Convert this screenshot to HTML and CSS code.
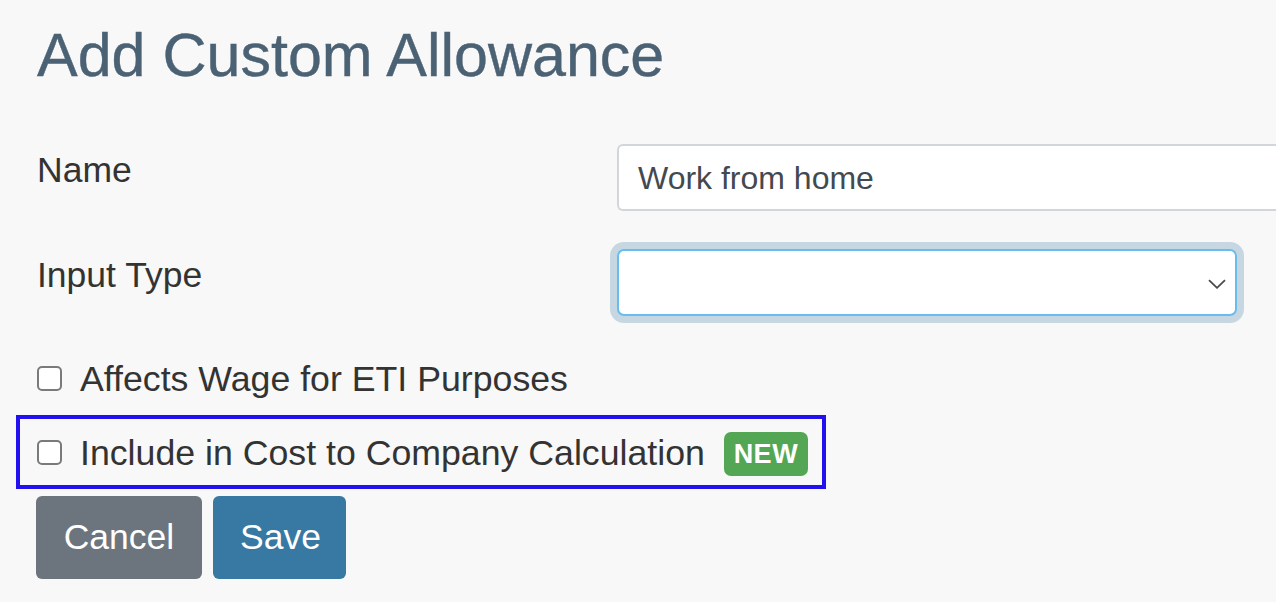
FILE: index.html
```html
<!DOCTYPE html>
<html lang="en">
<head>
<meta charset="utf-8">
<title>Add Custom Allowance</title>
<link rel="stylesheet" href="styles.css">
</head>
<body>
<div class="page">
  <h1 class="title">Add Custom Allowance</h1>
  <form class="form">
    <div class="row row-name">
      <label class="label">Name</label>
      <div class="input name-input">Work from home</div>
    </div>
    <div class="row row-type">
      <label class="label">Input Type</label>
      <div class="select">
        <svg class="chevron" width="18" height="10" viewBox="0 0 18 10"><path d="M1 1.2 L9 8.8 L17 1.2" fill="none" stroke="#4a4a4a" stroke-width="1.8"/></svg>
      </div>
    </div>
    <div class="check-row">
      <span class="checkbox"></span>
      <span class="check-label">Affects Wage for ETI Purposes</span>
    </div>
    <div class="highlight">
      <div class="check-row inner">
        <span class="checkbox"></span>
        <span class="check-label">Include in Cost to Company Calculation</span>
        <span class="badge">NEW</span>
      </div>
    </div>
    <div class="actions">
      <button type="button" class="btn btn-cancel">Cancel</button>
      <button type="button" class="btn btn-save">Save</button>
    </div>
  </form>
</div>
</body>
</html>
```
FILE: styles.css
```css
html, body {
  margin: 0;
  padding: 0;
  background: #f8f8f8;
  overflow: hidden;
}
body {
  font-family: "Liberation Sans", Arial, Helvetica, sans-serif;
  color: #333333;
}
.page {
  padding-left: 37px;
  width: 1300px;
}
.title {
  margin: 19px 0 0 0;
  font-size: 61px;
  line-height: 1.2;
  font-weight: 400;
  color: #4b6174;
  height: 73px;
  -webkit-text-stroke: 0.4px #4b6174;
}
.form {
  margin-top: 52px;
}
.row {
  display: flex;
  align-items: flex-start;
}
.row-type {
  margin-top: 38px;
}
.label {
  width: 580px;
  font-size: 35.5px;
  line-height: 1.5;
}
.input {
  box-sizing: border-box;
  height: 67px;
  background: #ffffff;
  border: 2px solid #d2d6db;
  border-radius: 6px;
  font-size: 32px;
  color: #44494f;
  display: flex;
  align-items: center;
  padding-left: 19px;
  padding-top: 2px;
}
.name-input {
  width: 700px;
  border-right: none;
  border-radius: 6px 0 0 6px;
}
.select {
  box-sizing: border-box;
  width: 620px;
  height: 67px;
  background: #ffffff;
  border: 2px solid #69bcf0;
  border-radius: 7px;
  box-shadow: 0 0 0 7px #c7d7e1;
  display: flex;
  align-items: center;
  justify-content: flex-end;
  padding-right: 9px;
}
.chevron {
  display: block;
  margin-top: 2px;
}
.check-row {
  display: flex;
  align-items: flex-start;
  margin-top: 37px;
  font-size: 35.7px;
  line-height: 1.5;
}
.checkbox {
  box-sizing: border-box;
  width: 25px;
  height: 25px;
  border: 2px solid #7a7a7a;
  border-radius: 5px;
  background: #ffffff;
  margin-top: 13px;
  margin-right: 18px;
  flex: none;
}
.highlight {
  display: inline-block;
  margin: 8px 0 0 -21px;
  border: 4px solid #2211ee;
  padding: 8px 14px 5px 17px;
}
.check-row.inner {
  margin-top: 0;
  align-items: flex-start;
}
.badge {
  margin-left: 19px;
  margin-top: 5px;
  width: 84px;
  height: 44px;
  box-sizing: border-box;
  background: #53a653;
  color: #ffffff;
  border-radius: 7px;
  font-size: 27px;
  font-weight: 700;
  line-height: 44px;
  text-align: center;
  letter-spacing: 0.5px;
}
.actions {
  display: flex;
  gap: 11px;
  margin-top: 7px;
  margin-left: -1px;
}
.btn {
  box-sizing: border-box;
  height: 83px;
  border: none;
  border-radius: 6px;
  color: #ffffff;
  font-family: "Liberation Sans", Arial, Helvetica, sans-serif;
  font-size: 35.5px;
  padding: 0 27px;
  cursor: pointer;
}
.btn-cancel {
  background: #6c757d;
  width: 166px;
}
.btn-save {
  background: #3779a3;
  width: 133px;
}
```
